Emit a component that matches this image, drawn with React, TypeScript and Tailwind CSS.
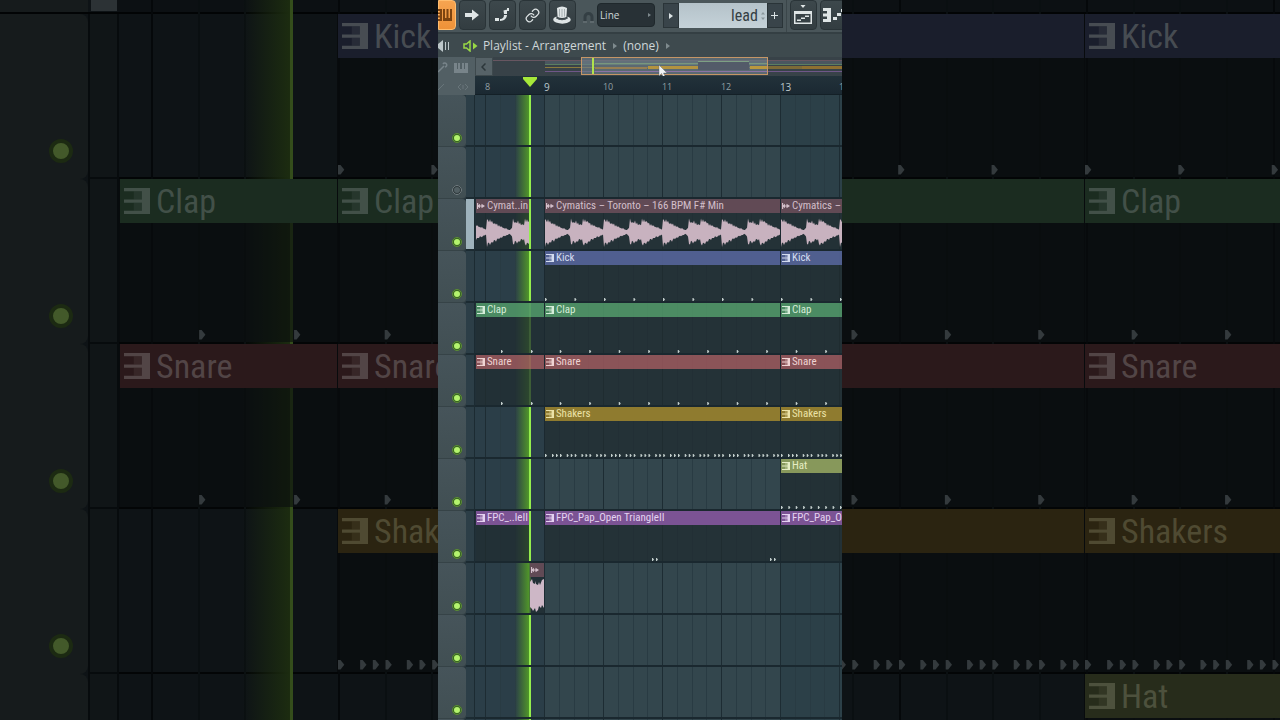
import React, { useState } from 'react';
import clsx from 'clsx';
import { Link } from 'lucide-react';

type Kind = 'kick' | 'clap' | 'snare' | 'shakers' | 'hat' | 'fpc' | 'audio';

interface Clip {
  name: string;
  slot: 'intro' | 'cut' | 'tail' | 'main' | 'rest';
  kind?: Kind;
  notes?: number[];
  wavePhase?: number;
}

interface Track {
  clips: Clip[];
  muted?: boolean;
  selected?: boolean;
}

const BAR = 59;

const steps = (from: number, gap: number, to: number) => {
  const out: number[] = [];
  for (let x = from; x < to; x += gap) out.push(x);
  return out;
};

const kickNotes = steps(0, BAR / 2, 236);
const clapNotes = steps(BAR / 4, BAR / 2, 236);
const hatNotes = steps(0, BAR / 8, 236);
const shakerNotes = [0, ...steps(0, BAR / 4, 232).flatMap((x) => [x + 7, x + 11, x + 15])];
const fpcNotes = [107, 111, 225, 229];

const gap = (slot: Clip['slot']): Clip => ({ name: '', slot });

const kickTrack: Track = {
  clips: [
    gap('intro'),
    { name: 'Kick', slot: 'main', kind: 'kick', notes: kickNotes },
    { name: 'Kick', slot: 'rest', kind: 'kick', notes: kickNotes },
  ],
};
const clapTrack: Track = {
  clips: [
    { name: 'Clap', slot: 'intro', kind: 'clap', notes: [25, 55] },
    { name: 'Clap', slot: 'main', kind: 'clap', notes: clapNotes },
    { name: 'Clap', slot: 'rest', kind: 'clap', notes: clapNotes },
  ],
};
const snareTrack: Track = {
  clips: [
    { name: 'Snare', slot: 'intro', kind: 'snare', notes: [25, 55] },
    { name: 'Snare', slot: 'main', kind: 'snare', notes: clapNotes },
    { name: 'Snare', slot: 'rest', kind: 'snare', notes: clapNotes },
  ],
};
const shakersTrack: Track = {
  clips: [
    gap('intro'),
    { name: 'Shakers', slot: 'main', kind: 'shakers', notes: shakerNotes },
    { name: 'Shakers', slot: 'rest', kind: 'shakers', notes: shakerNotes },
  ],
};
const hatTrack: Track = {
  clips: [gap('intro'), gap('main'), { name: 'Hat', slot: 'rest', kind: 'hat', notes: hatNotes }],
};
const emptyTrack: Track = { clips: [gap('intro'), gap('main'), gap('rest')] };

const tracks: Track[] = [
  emptyTrack,
  { ...emptyTrack, muted: true },
  {
    selected: true,
    clips: [
      { name: 'Cymat..in', slot: 'cut', kind: 'audio', wavePhase: 48 },
      gap('tail'),
      { name: 'Cymatics – Toronto – 166 BPM F# Min', slot: 'main', kind: 'audio', wavePhase: 0 },
      { name: 'Cymatics –', slot: 'rest', kind: 'audio', wavePhase: 0 },
    ],
  },
  kickTrack,
  clapTrack,
  snareTrack,
  shakersTrack,
  hatTrack,
  {
    clips: [
      { name: 'FPC_..leII', slot: 'cut', kind: 'fpc', notes: [] },
      gap('tail'),
      { name: 'FPC_Pap_Open TriangleII', slot: 'main', kind: 'fpc', notes: fpcNotes },
      { name: 'FPC_Pap_O', slot: 'rest', kind: 'fpc', notes: fpcNotes },
    ],
  },
  {
    clips: [gap('cut'), { name: '', slot: 'tail', kind: 'audio' }, gap('main'), gap('rest')],
  },
  emptyTrack,
  emptyTrack,
  emptyTrack,
];

const backdropTracks = [kickTrack, clapTrack, snareTrack, shakersTrack, hatTrack];

const headerColor: Record<Kind, string> = {
  kick: 'bg-[#526194]/95 text-[#d3dcef]',
  clap: 'bg-[#4f9466]/90 text-[#d5ecd9]',
  snare: 'bg-[#95555a]/90 text-[#efd3d3]',
  shakers: 'bg-[#8f7b2f] text-[#ebe2a8]',
  hat: 'bg-[#87985b] text-[#e6edc4]',
  fpc: 'bg-[#7b5394] text-[#e4d2f0]',
  audio: 'bg-[#614a55] text-[#d3bfca]',
};

const dimHeaderColor: Record<Kind, string> = {
  kick: 'bg-[#1a1e2c] text-[#474c52]',
  clap: 'bg-[#1b2c20] text-[#425048]',
  snare: 'bg-[#2b191b] text-[#524546]',
  shakers: 'bg-[#2b2411] text-[#4f4a32]',
  hat: 'bg-[#272c1b] text-[#4d513d]',
  fpc: 'bg-[#241a2b] text-[#504858]',
  audio: 'bg-[#1f181b] text-[#50484c]',
};

const slotWidth = {
  intro: 'w-[69px]',
  cut: 'w-[54px]',
  tail: 'w-[15px]',
  main: 'w-[236px]',
  rest: 'flex-1',
};

const dimSlotWidth = { ...slotWidth, intro: 'w-[218px]', main: 'w-[747px]' };

// loudness of one bar of the loop: [x, amplitude]
const envelope = [
  [0, 14], [1, 12], [4, 12], [7, 9], [9, 9], [11, 7], [14, 6], [17, 4], [19, 4], [22, 2],
  [24, 3], [25, 5], [26, 13], [28, 10], [31, 11], [34, 8], [37, 8], [38, 13], [43, 11], [46, 8],
  [49, 7], [52, 5], [54, 5], [57, 3], [59, 3],
];

const loudness = (x: number) => {
  const i = Math.max(1, envelope.findIndex(([px]) => px > x));
  const [x0, y0] = envelope[i - 1];
  const [x1, y1] = envelope[i];
  return y0 + ((y1 - y0) * (x - x0)) / (x1 - x0);
};

const wavePath = (phase: number, width: number) => {
  const top: string[] = [];
  const bottom: string[] = [];
  for (let x = 0; x <= width; x += 1) {
    const t = (x + phase) % BAR;
    const level = loudness(t);
    top.push(`${x},${19 - level * (0.92 + 0.14 * Math.sin(t * 2.7))}`);
    bottom.unshift(`${x},${19 + level * (0.96 + 0.12 * Math.cos(t * 2.1))}`);
  }
  return `M${[...top, ...bottom].join('L')}Z`;
};

const Wave: React.FC<{ phase?: number }> = ({ phase }) => (
  <svg className="absolute inset-0 h-full w-full" aria-hidden="true">
    {phase === undefined ? (
      <path
        d="M0 5L2 2L3 6L5 7V4L6 7L8 8L9 5L10 8L12 3L14 2V31L12 28L11 31L9 29L8 33L6 35L5 31L3 34L2 32L0 30Z"
        fill="#cdb7c6"
      />
    ) : (
      <path d={wavePath(phase, 236)} fill="#c8b2bf" />
    )}
  </svg>
);

const Notes: React.FC<{ notes: number[]; large?: boolean }> = ({ notes, large }) => (
  <svg
    className={clsx('absolute bottom-0 left-0 w-full', large ? 'h-3' : 'h-[3px]')}
    aria-hidden="true"
  >
    <g transform={large ? 'scale(3.165)' : undefined} fill={large ? '#343a3d' : '#c3cfcd'}>
      {notes.map((x) => (
        <path key={x} d={`M${x} 0h.8l1.2 1.5l-1.2 1.5h-.8z`} />
      ))}
    </g>
  </svg>
);

const PatternIcon = ({ className }: { className: string }) => (
  <svg className={className} viewBox="0 0 8 8" fill="currentColor" aria-hidden="true">
    <path d="M0 0H8V8H0V7H5.500V4.500H0V3.500H5.500V1H0Z" />
    <path d="M3 1h2.500v2.500H3zM3 4.500h2.500V7H3z" opacity=".3" />
  </svg>
);

const AudioIcon = () => (
  <svg className="h-2 w-2 shrink-0" viewBox="0 0 8 8" fill="currentColor" aria-hidden="true">
    <path d="M0 1h1.200v2.300L3 1.800V3.400h1.500V1.800L8 4L4.500 6.200V4.600H3V6.200L1.200 4.700V7H0z" />
  </svg>
);

const ClipView: React.FC<{ clip: Clip; large?: boolean }> = ({ clip, large }) => {
  const width = large ? dimSlotWidth[clip.slot] : slotWidth[clip.slot];
  if (!clip.kind) return <div className={clsx(clip.slot !== 'rest' && 'shrink-0', width)} />;

  return (
    <div
      className={clsx(
        'relative z-10 flex min-w-0 flex-col overflow-hidden border-l',
        clip.slot !== 'rest' && 'shrink-0',
        large ? 'border-black/40' : 'border-[#1b282e]/60',
        width,
      )}
    >
      <div
        className={clsx(
          'flex items-center whitespace-nowrap',
          large ? 'h-11 gap-[6px] pl-1 text-[34px] leading-10' : 'h-[14px] gap-[2px] pl-px text-[11px] leading-3',
          large ? dimHeaderColor[clip.kind] : headerColor[clip.kind],
        )}
      >
        {clip.kind === 'audio' ? (
          <AudioIcon />
        ) : (
          <PatternIcon className={clsx('shrink-0', large ? 'h-[26px] w-[26px]' : 'h-2 w-2')} />
        )}
        {clip.name && <span>{clip.name}</span>}
      </div>
      <div className={clsx('relative flex-1', large ? 'bg-[#080b0d]/60' : 'bg-[#202c30]/75')}>
        {clip.notes && <Notes notes={clip.notes} large={large} />}
        {clip.kind === 'audio' && <Wave phase={clip.wavePhase} />}
      </div>
    </div>
  );
};

const Lane: React.FC<{ track: Track; index: number }> = ({ track, index }) => {
  const [on, setOn] = useState(!track.muted);
  return (
    <div className="flex h-[52px] shrink-0">
      <div className="flex w-7 shrink-0 items-end justify-end rounded-r border-b border-[#364347] bg-linear-to-b from-[#46545a] to-[#414f53] pr-1 pb-[3px]">
        <input
          type="checkbox"
          aria-label={`Track ${index + 1}`}
          checked={on}
          onChange={() => setOn(!on)}
          className="h-[10px] w-[10px] appearance-none rounded-full border-2 border-[#2c3639] bg-[#525f63] outline -outline-offset-1 outline-[#727e82] checked:border-[#37651f] checked:bg-[#b4f36e] checked:outline-[#5d8a3c]"
        />
      </div>
      <div
        className={clsx(
          'w-[9px] shrink-0 border-r border-b-2 border-[#1c2b32]',
          track.selected ? 'bg-[#9eb2bc]' : 'bg-[#30454f]/60',
        )}
      />
      <div className="flex min-w-0 flex-1 border-b-2 border-[#1a282f]">
        {track.clips.map((clip, i) => (
          <ClipView key={i} clip={clip} />
        ))}
      </div>
    </div>
  );
};

const Backdrop = () => (
  <div className="relative flex min-w-0 flex-col overflow-hidden bg-[#0e1316]" aria-hidden="true">
    <div className="absolute inset-y-0 left-[119px] right-0 bg-[linear-gradient(90deg,#05080a_0_2px,transparent_2px_47px,#0a0f11_47px_49px,transparent_49px_93px,#0a0f11_93px_95px,transparent_95px_140px,#0a0f11_140px_142px,transparent_142px)] bg-[size:187px_100%] bg-[position:32px_0]" />
    <div className="absolute inset-y-0 left-[243px] w-[50px] border-r-3 border-[#344d1b] bg-linear-to-r from-transparent to-[#1c2c10]" />
    <div className="flex h-[14px] shrink-0 border-b-2 border-[#020405]">
      <div className="w-[88px] bg-[#161b1c]" />
      <div className="ml-[3px] h-[11px] w-[26px] bg-[#2c3235]" />
      <div className="flex-1 bg-[#0b1012]/70" />
    </div>
    {backdropTracks.map((track, i) => (
      <div key={i} className="flex h-[165px] shrink-0">
        <div className="flex w-[88px] shrink-0 items-end justify-end rounded-r-lg bg-[#161b1c] pr-[15px] pb-4">
          <div className="h-6 w-6 rounded-full border-4 border-[#1c2a12] bg-[#43592a]" />
        </div>
        <div className="w-[31px] shrink-0 border-x-2 border-b-2 border-[#070b0d] bg-[#101517]" />
        <div className="flex min-w-0 flex-1 border-b-2 border-[#030506]">
          {track.clips.map((clip, n) => (
            <ClipView key={n} clip={clip} large />
          ))}
        </div>
      </div>
    ))}
  </div>
);

const toolButton =
  'flex h-[30px] w-[27px] shrink-0 items-center justify-center rounded-sm border border-[#2a3438] bg-linear-to-b from-[#3d484c] to-[#333d41] text-[#dfe5e6]';

const Toolbar = () => {
  const [channel, setChannel] = useState('lead');
  return (
    <div className="flex h-[34px] shrink-0 items-start gap-[3px] overflow-hidden border-b-2 border-[#343f43] bg-[#4a565a]">
      <button
        aria-label="Playlist"
        className="flex h-[30px] w-[18px] shrink-0 items-center justify-end rounded-r-sm border border-[#ffbd6e] bg-linear-to-b from-[#f6a450] to-[#ee9238] pr-[2px] text-[#7d4410]"
      >
        <svg className="h-3 w-4 shrink-0" viewBox="0 0 16 12" fill="currentColor">
          <path d="M0 0h5v12H0v-2h3V8.500H0v-2h3V5H0V3.500h3V2H0zM6 0h2v9h1.500V0h2v9H13V0h2v12H6z" />
        </svg>
      </button>
      <button aria-label="Step" className={toolButton}>
        <svg className="h-3 w-[14px]" viewBox="0 0 14 12" fill="currentColor">
          <path d="M0 4h7V0.500L14 6L7 11.500V8H0z" />
        </svg>
      </button>
      <button aria-label="Slide" className={toolButton}>
        <svg className="h-4 w-4" viewBox="0 0 16 16" fill="currentColor">
          <path d="M1 11h4v3H1zM6 12c3 0 4-2 4-4h3c0 3-3 6-7 6zM9.500 3.500L13 2.500v4.500h-3zM13 1h2v3h-2z" />
        </svg>
      </button>
      <button aria-label="Link" className={toolButton}>
        <Link size={15} strokeWidth={2} />
      </button>
      <button aria-label="Render" className={toolButton}>
        <svg className="h-[18px] w-5" viewBox="0 0 20 18" fill="currentColor">
          <path d="M5 2Q10-1 15 2L14.400 11Q10 13 5.600 11z" />
          <path d="M4.500 10.500C0 12 .5 15 4 16.500C8 18 13 18 16 16.500C20 15 19.500 12 15.500 10.500V12.500Q10 15.500 4.500 12.500z" />
          <path d="M7.500 3V10.500M10 3V11M12.500 3V10.500" stroke="#98a2a5" strokeWidth=".8" />
          <path d="M4.500 12.300Q10 15.300 15.500 12.300" fill="none" stroke="#4c575b" />
        </svg>
      </button>
      <svg className="mt-3 ml-1 h-3 w-[11px] shrink-0" viewBox="0 0 11 12" fill="none" aria-hidden="true">
        <path d="M2 11V5a3.500 3.500 0 0 1 7 0V11" stroke="#343f44" strokeWidth="3" />
        <path d="M0 10h4M7 10h4" stroke="#5e696d" strokeWidth="2" />
      </svg>
      <label className="relative mt-[3px] shrink-0">
        <select
          aria-label="Snap"
          className="block h-6 w-[58px] appearance-none rounded-sm border border-[#1f282c] bg-[#283136] pl-[2px] font-['Open_Sans',sans-serif] text-[10px] leading-4 text-[#ccd5d8]"
        >
          <option>Line</option>
          <option>Bar</option>
        </select>
        <svg className="pointer-events-none absolute top-[10px] right-1 h-1 w-[3px]" viewBox="0 0 3 4">
          <path d="M0 0L3 2L0 4z" fill="#7d888c" />
        </svg>
      </label>
      <div className="mt-[3px] ml-[5px] flex shrink-0">
        <button
          aria-label="Patterns"
          className="flex h-[25px] w-4 items-center justify-center border border-[#2a3438] bg-[#39444a]"
        >
          <svg className="h-[6px] w-1" viewBox="0 0 4 6">
            <path d="M0 0L4 3L0 6z" fill="#dbe3e5" />
          </svg>
        </button>
        <div className="relative">
          <input
            aria-label="Pattern name"
            value={channel}
            onChange={(e) => setChannel(e.target.value)}
            className="block h-[25px] w-[88px] bg-linear-to-b from-[#b4c2c9] to-[#c5d2d9] pr-[9px] text-right text-base leading-5 text-[#343e43]"
          />
          <svg className="absolute top-2 right-[2px] h-[10px] w-1" viewBox="0 0 4 10" fill="#8a979c">
            <path d="M0 3.500L2 1L4 3.500zM0 6.500H4L2 9z" />
          </svg>
        </div>
        <button
          aria-label="Add pattern"
          className="flex h-[25px] w-4 items-center justify-center border border-[#2a3438] bg-[#39444a]"
        >
          <svg className="h-[7px] w-[7px]" viewBox="0 0 7 7">
            <path d="M3 0h1v3h3v1H4v3H3V4H0V3h3z" fill="#dbe3e5" />
          </svg>
        </button>
      </div>
      <div className="h-8 w-px shrink-0 bg-[#3b464a]" />
      <button aria-label="Piano roll" className={toolButton}>
        <svg className="h-[20px] w-[18px]" viewBox="0 0 18 20" fill="currentColor">
          <path d="M6.500 0h5L9 3z" />
          <path d="M0 6h18v13H0zM1.500 9v8.500h15V9z" fillRule="evenodd" />
          <path d="M3 14.500h4v1.500H3zM7 12.500h4V14H7zM11 10.500h4V12h-4z" />
        </svg>
      </button>
      <button aria-label="Channel rack" className={clsx(toolButton, 'justify-start pl-[2px]')}>
        <svg className="h-4 w-[22px] shrink-0" viewBox="0 0 22 16" fill="currentColor">
          <path d="M0 1h8v14H0v-3h4v-2.500H0v-3h4V4H0zM10 10h4v3h-4zM14 6h4v3h-4zM18 2h4v3h-4z" />
        </svg>
      </button>
    </div>
  );
};

const Chevron = () => (
  <svg className="h-[6px] w-1 shrink-0" viewBox="0 0 4 6" aria-hidden="true">
    <path d="M0 0L4 3L0 6z" fill="#7f8b8e" />
  </svg>
);

const TitleBar = () => (
  <div className="flex h-[23px] shrink-0 items-center overflow-hidden bg-[#3e4a4e] font-['Open_Sans',sans-serif] text-xs font-medium whitespace-nowrap text-[#ced7d9]">
    <svg className="h-3 w-3 shrink-0" viewBox="0 0 12 12" fill="#bcc6c9" aria-hidden="true">
      <path d="M0 4L5 0V12L0 8zM7 2h1v8H7zM10 2h1v8h-1z" />
    </svg>
    <svg className="ml-[13px] h-3 w-[15px] shrink-0" viewBox="0 0 15 12" aria-hidden="true">
      <path d="M1 4h2.500L7 1V11L3.500 8H1z" fill="none" stroke="#98d845" strokeWidth="1.500" />
      <path d="M10 2.500L14.500 6L10 9.500z" fill="#98d845" />
    </svg>
    <h1 className="mr-[7px] ml-[5px]">Playlist - Arrangement</h1>
    <Chevron />
    <span className="mr-[7px] ml-[6px]">(none)</span>
    <Chevron />
  </div>
);

const Overview = () => (
  <div className="relative flex h-[19px] overflow-hidden bg-[#384248]">
    <button aria-label="Scroll left" className="flex w-[18px] shrink-0 items-center justify-center border border-[#3e494d] bg-[#566267]">
      <svg className="h-2 w-[5px]" viewBox="0 0 5 8" fill="none" stroke="#2c363a" strokeWidth="1.500">
        <path d="M4.500 .5L1 4L4.500 7.500" />
      </svg>
    </button>
    <svg className="h-full min-w-0 flex-1" aria-hidden="true">
      <rect x="0" y="3" width="100%" height="1" fill="#685661" />
      <rect x="52" y="4" width="100%" height="3" fill="#4a5660" />
      <rect x="52" y="7" width="100%" height="1" fill="#5b7e61" />
      <rect x="52" y="10" width="100%" height="1" fill="#8b7a3d" />
      <rect x="52" y="14" width="100%" height="1" fill="#6f5788" />
      <rect x="89" y="1" width="186" height="16" fill="#6f7e89" fillOpacity=".65" />
      <rect x="102" y="6" width="172" height="1" fill="#79977d" />
      <rect x="102" y="10" width="52" height="2" fill="#967f53" />
      <rect x="155" y="9" width="50" height="3" fill="#b3933f" />
      <rect x="102" y="14" width="172" height="1" fill="#8b73a5" />
      <rect x="205" y="5" width="51" height="8" fill="#535b69" />
      <rect x="205" y="4" width="51" height="1" fill="#7da084" />
      <rect x="257" y="9" width="17" height="3" fill="#b9983e" />
      <rect x="275" y="9" width="34" height="3" fill="#7d6a37" />
      <rect x="309" y="9" width="100%" height="3" fill="#8e7031" />
      <rect x="99" y="1" width="2" height="16" fill="#b1e34c" />
      <rect x="88.500" y=".5" width="186" height="17" fill="none" stroke="#c59666" />
    </svg>
    <svg className="absolute top-2 left-[183px] h-3 w-[10px]" viewBox="0 0 10 12" aria-hidden="true">
      <path d="M1 0V11L3.500 8.500L5.300 12L7 11.200L5.500 8H9z" fill="#f1f3f4" stroke="#535e64" strokeWidth=".4" />
    </svg>
  </div>
);

const Ruler = () => (
  <div className="relative flex h-[19px] items-center overflow-hidden border-b border-[#142027] bg-linear-to-b from-[#22323a] to-[#1b2932] pt-[3px] pl-[10px] font-['Open_Sans',sans-serif] text-[9px] leading-4 text-[#93a0a5]">
    {[8, 9, 10, 11, 12, 13, 14].map((bar) => (
      <span key={bar} className={clsx('w-[59px] shrink-0', (bar === 9 || bar === 13) && 'text-[10px] text-[#bcc7cb]')}>
        {bar}
      </span>
    ))}
    <svg className="absolute top-[1px] left-12 h-[10px] w-[14px]" viewBox="0 0 14 10" aria-hidden="true">
      <path d="M0 0H14V2L7 10L0 2z" fill="#a6e83a" />
    </svg>
  </div>
);

const TimelineHeader = () => (
  <div className="flex h-[38px] shrink-0">
    <div className="flex w-[37px] shrink-0 flex-col justify-around bg-[#525f64] text-[#78848a]">
      <div className="flex items-center gap-[6px]">
        <svg className="h-3 w-[10px]" viewBox="0 0 10 12" fill="none" stroke="currentColor">
          <path d="M0 10L6 4M5 2a2 2 0 1 1 2 3" strokeWidth="1.500" />
        </svg>
        <svg className="h-[10px] w-[14px]" viewBox="0 0 14 10" fill="currentColor">
          <path d="M0 0h3v6h1V0h2v6h2V0h2v6h1V0h3v10H0z" />
        </svg>
      </div>
      <div className="flex items-center gap-3 opacity-60">
        <svg className="h-2 w-2" viewBox="0 0 8 8" fill="none" stroke="currentColor">
          <path d="M0 7L6 1" />
        </svg>
        <svg className="h-[6px] w-[10px]" viewBox="0 0 10 6" fill="none" stroke="currentColor">
          <path d="M3 0L0 3L3 6M7 0L10 3L7 6M5 1V5" />
        </svg>
      </div>
    </div>
    <div className="min-w-0 flex-1">
      <Overview />
      <Ruler />
    </div>
  </div>
);

const Playlist = () => (
  <main className="z-20 col-start-2 row-start-1 flex min-w-0 flex-col overflow-hidden bg-[#26353c]">
    <Toolbar />
    <TitleBar />
    <TimelineHeader />
    <div className="relative flex min-h-0 flex-1 flex-col overflow-hidden">
      {/* bar shading, grid lines and playhead sit under the clips */}
      <div className="absolute inset-y-0 right-0 left-[37px] flex">
        <div className="w-[69px] shrink-0 bg-[#2b3e48]" />
        <div className="w-[236px] shrink-0 bg-[#33464d]" />
        <div className="flex-1 bg-[#2c4048]" />
      </div>
      <div className="absolute inset-y-0 right-0 left-[37px] bg-[linear-gradient(90deg,#1d2c33_0_1px,transparent_1px_15px,#293b43_15px_16px,transparent_16px_30px,#293b43_30px_31px,transparent_31px_44px,#293b43_44px_45px,transparent_45px)] bg-[size:59px_100%] bg-[position:10px_0]" />
      <div className="absolute inset-y-0 left-[77px] w-4 border-r-2 border-[#94ee4d] bg-linear-to-r from-transparent to-[#50952a]" />
      <div className="relative">
        {tracks.map((track, i) => (
          <Lane key={i} track={track} index={i} />
        ))}
      </div>
    </div>
  </main>
);

const App: React.FC = () => (
  <div className="grid h-screen grid-cols-[13fr_12fr_13fr] grid-rows-1 overflow-hidden bg-black font-['Roboto_Condensed','Noto_Sans_Condensed','Open_Sans_Condensed',sans-serif]">
    <div className="col-span-3 col-start-1 row-start-1 grid min-w-0 grid-cols-1 overflow-hidden">
      <Backdrop />
    </div>
    <Playlist />
  </div>
);

export default App;
